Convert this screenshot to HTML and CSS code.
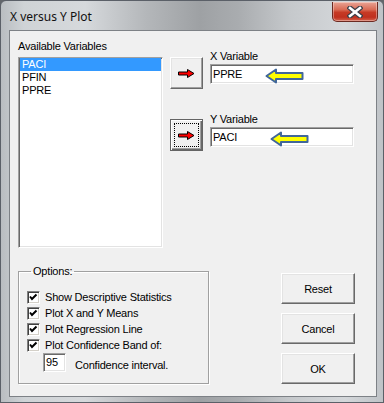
FILE: index.html
```html
<!DOCTYPE html>
<html lang="en">
<head>
<meta charset="UTF-8">
<title>X versus Y Plot</title>
<link rel="stylesheet" href="styles.css">
</head>
<body>
<div class="window">
    <div class="titlebar">
        <span class="title">X versus Y Plot</span>
        <button class="close">
            <svg width="16" height="12" viewBox="0 0 16 12">
                <path d="M3 2 L13 10 M13 2 L3 10" stroke="#3a3f48" stroke-width="5" stroke-linecap="square"/>
                <path d="M3 2 L13 10 M13 2 L3 10" stroke="#fff" stroke-width="2.6" stroke-linecap="square"/>
            </svg>
        </button>
    </div>
    <div class="client">
        <div class="top">
            <div class="avail">
                <div class="label">Available Variables</div>
                <div class="listbox">
                    <div class="item selected">PACI</div>
                    <div class="item">PFIN</div>
                    <div class="item">PPRE</div>
                </div>
            </div>
            <div class="arrows">
                <button class="arrow-btn">
                    <svg width="17" height="9" viewBox="0 0 17 9"><polygon points="0.5,3 9.5,3 9.5,0.5 16,4.5 9.5,8.5 9.5,6 0.5,6" fill="#ff0000" stroke="#000" stroke-width="1"/></svg>
                </button>
                <button class="arrow-btn focused">
                    <span class="focus-rect">
                        <svg width="17" height="9" viewBox="0 0 17 9"><polygon points="0.5,3 9.5,3 9.5,0.5 16,4.5 9.5,8.5 9.5,6 0.5,6" fill="#ff0000" stroke="#000" stroke-width="1"/></svg>
                    </span>
                </button>
            </div>
            <div class="fields">
                <div class="label">X Variable</div>
                <div class="edit">
                    PPRE
                    <svg class="hint hint-x" width="39" height="16" viewBox="0 0 39 16"><polygon points="1.5,8 11,1.5 11,5 37.5,5 37.5,11 11,11 11,14.5" fill="#ffff00" stroke="#41679a" stroke-width="2" stroke-linejoin="round"/></svg>
                </div>
                <div class="label y-label">Y Variable</div>
                <div class="edit">
                    PACI
                    <svg class="hint hint-y" width="39" height="16" viewBox="0 0 39 16"><polygon points="1.5,8 11,1.5 11,5 37.5,5 37.5,11 11,11 11,14.5" fill="#ffff00" stroke="#41679a" stroke-width="2" stroke-linejoin="round"/></svg>
                </div>
            </div>
        </div>
        <div class="bottom">
            <fieldset class="options">
                <legend>Options:</legend>
                <div class="check-row"><span class="check"><svg width="11" height="11" viewBox="0 0 11 11"><path d="M2 4.5 L4 7 L8.5 2.5" fill="none" stroke="#000" stroke-width="2"/></svg></span>Show Descriptive Statistics</div>
                <div class="check-row"><span class="check"><svg width="11" height="11" viewBox="0 0 11 11"><path d="M2 4.5 L4 7 L8.5 2.5" fill="none" stroke="#000" stroke-width="2"/></svg></span>Plot X and Y Means</div>
                <div class="check-row"><span class="check"><svg width="11" height="11" viewBox="0 0 11 11"><path d="M2 4.5 L4 7 L8.5 2.5" fill="none" stroke="#000" stroke-width="2"/></svg></span>Plot Regression Line</div>
                <div class="check-row"><span class="check"><svg width="11" height="11" viewBox="0 0 11 11"><path d="M2 4.5 L4 7 L8.5 2.5" fill="none" stroke="#000" stroke-width="2"/></svg></span>Plot Confidence Band of:</div>
                <div class="conf-row">
                    <div class="edit small">95</div>
                    <span class="conf-label">Confidence interval.</span>
                </div>
            </fieldset>
            <div class="actions">
                <button class="btn">Reset</button>
                <button class="btn">Cancel</button>
                <button class="btn">OK</button>
            </div>
        </div>
    </div>
</div>
</body>
</html>
```

FILE: styles.css
```css
body {
    margin: 0;
    padding: 0;
    background: #62666b;
    font-family: "Liberation Sans", Arial, sans-serif;
    font-size: 11px;
    letter-spacing: -0.2px;
    color: #000;
}
.window {
    width: 384px;
    height: 403px;
    box-sizing: border-box;
    background: linear-gradient(90deg, #b9bdc1 0%, #cfd3d6 6%, #d6d9dc 22%, #b4b7ba 38%, #9ea1a4 52%, #a9acaf 62%, #c6c9cc 76%, #d4d7da 90%, #bfc3c7 100%);
    border: 1px solid #5b6068;
    border-radius: 6px 6px 0 0;
    display: flex;
    flex-direction: column;
}
.titlebar {
    height: 29px;
    display: flex;
    align-items: flex-start;
    justify-content: space-between;
}
.title {
    font-family: "Noto Sans", sans-serif;
    font-size: 12px;
    letter-spacing: 0;
    color: #111;
    margin: 7px 0 0 9px;
}
.close {
    width: 46px;
    height: 20px;
    margin: 1px 5px 0 0;
    padding: 0;
    border: 1px solid #6b2a22;
    border-top: none;
    border-radius: 0 0 5px 5px;
    background: linear-gradient(180deg, #e9a596 0%, #d96b55 40%, #c63a25 55%, #c0301f 80%, #d4624b 100%);
    box-shadow: inset 0 0 0 1px rgba(255, 255, 255, 0.35);
    display: flex;
    align-items: center;
    justify-content: center;
}
.client {
    flex: 1;
    margin: 0 6px 5px 8px;
    background: #f0f0f0;
    border: 1px solid #7d8186;
}
.label {
    line-height: 13px;
    margin-bottom: 4px;
}
.top {
    display: flex;
    align-items: flex-start;
    padding: 9px 0 0 8px;
}
.avail {
    width: 145px;
}
.listbox {
    height: 189px;
    background: #fff;
    border: 1px solid;
    border-color: #a0a0a0 #fff #fff #a0a0a0;
    box-shadow: inset 1px 1px #696969, inset -1px -1px #e3e3e3;
}
.item {
    line-height: 13px;
    padding-left: 2px;
    margin: 0 1px;
}
.item.selected {
    background: #3399ff;
    color: #fff;
}
.arrows {
    display: flex;
    flex-direction: column;
    gap: 30px;
    margin: 17px 0 0 7px;
}
.arrow-btn {
    width: 33px;
    height: 32px;
    padding: 0;
    background: #f0f0f0;
    border: 1px solid;
    border-color: #fff #696969 #696969 #fff;
    box-shadow: inset -1px -1px #a0a0a0, inset 1px 1px #e3e3e3;
    display: flex;
    align-items: center;
    justify-content: center;
}
.arrow-btn.focused {
    border-color: #646464;
    box-shadow: inset 1px 1px #fff, inset -1px -1px #696969, inset -2px -2px #a0a0a0;
}
.focus-rect {
    width: 25px;
    height: 24px;
    border: 1px dotted #000;
    box-sizing: border-box;
    display: flex;
    align-items: center;
    justify-content: center;
}
.fields {
    width: 144px;
    margin: 10px 0 0 7px;
}
.fields .label {
    margin-bottom: 1px;
}
.fields .y-label {
    margin-top: 29px;
}
.edit {
    position: relative;
    height: 20px;
    box-sizing: border-box;
    background: #fff;
    border: 1px solid;
    border-color: #a0a0a0 #fff #fff #a0a0a0;
    box-shadow: inset 1px 1px #696969, inset -1px -1px #e3e3e3;
    padding-left: 2px;
    line-height: 18px;
}
.hint {
    position: absolute;
    top: 3px;
}
.hint-x {
    left: 54px;
}
.hint-y {
    left: 59px;
}
.bottom {
    display: flex;
    align-items: flex-start;
    margin-top: 17px;
}
.options {
    width: 191px;
    box-sizing: border-box;
    margin: 0 0 0 8px;
    padding: 11px 0 11px 8px;
    border: 1px solid #a0a0a0;
    box-shadow: inset 1px 1px #fff, 1px 1px #fff;
}
.options legend {
    line-height: 13px;
    padding: 0 2px;
    margin-left: 4px;
}
.check-row {
    display: flex;
    align-items: flex-start;
    height: 16px;
    line-height: 16px;
}
.check {
    width: 13px;
    height: 13px;
    box-sizing: border-box;
    margin: 2px 5px 0 0;
    background: #fff;
    border: 1px solid;
    border-color: #808080 #fff #fff #808080;
    box-shadow: inset 1px 1px #404040, inset -1px -1px #d4d0c8;
    display: flex;
    align-items: center;
    justify-content: center;
}
.conf-row {
    display: flex;
    align-items: flex-end;
}
.edit.small {
    width: 23px;
    height: 19px;
    margin-left: 16px;
    line-height: 17px;
}
.conf-label {
    margin-left: 9px;
    line-height: 13px;
}
.actions {
    display: flex;
    flex-direction: column;
    gap: 9px;
    margin: 8px 21px 0 auto;
}
.btn {
    width: 74px;
    height: 31px;
    padding: 0;
    font-family: "Liberation Sans", Arial, sans-serif;
    font-size: 11px;
    letter-spacing: -0.2px;
    color: #000;
    background: #f0f0f0;
    border: 1px solid;
    border-color: #fff #696969 #696969 #fff;
    box-shadow: inset -1px -1px #a0a0a0, inset 1px 1px #e3e3e3;
}
```
